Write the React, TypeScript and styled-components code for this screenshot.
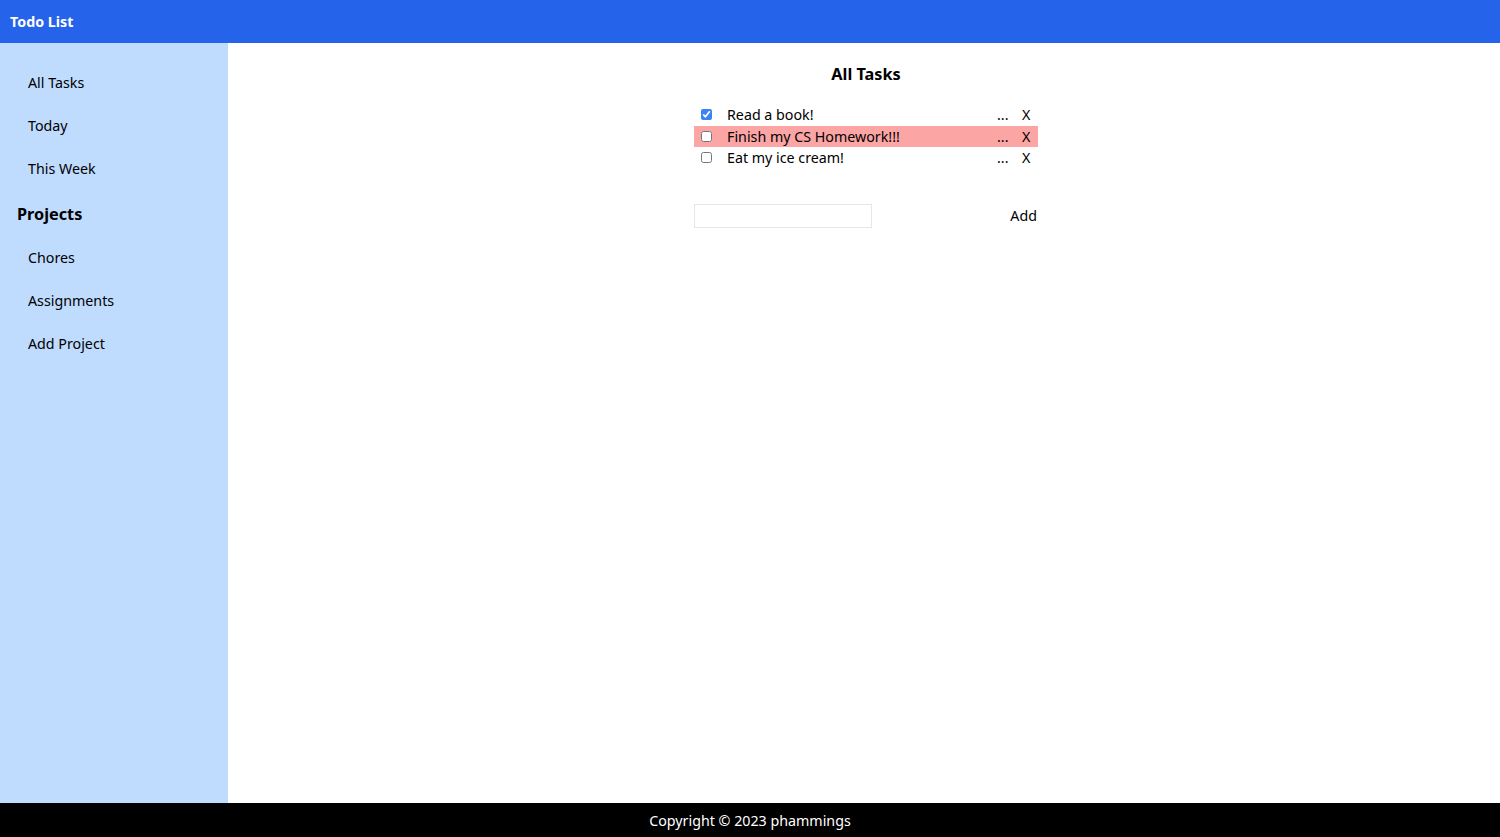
import styled, { createGlobalStyle } from 'styled-components';

const GlobalStyle = createGlobalStyle`
  html, body {
    margin: 0;
    padding: 0;
    font-family: "Noto Sans", "Open Sans", sans-serif;
    font-size: 14.25px;
    color: #000;
  }
`;

const Page = styled.div`
  display: flex;
  flex-direction: column;
  height: 100vh;
`;

const Header = styled.header`
  height: 43px;
  flex: none;
  background: #2563eb;
  color: #fff;
  font-weight: 700;
  font-size: 14.25px;
  display: flex;
  align-items: center;
  padding-left: 10px;
`;

const Body = styled.div`
  flex: 1;
  display: flex;
  min-height: 0;
`;

const Sidebar = styled.nav`
  width: 228px;
  flex: none;
  background: #bfdbfe;
  padding-top: 18px;
  box-sizing: border-box;
`;

const NavItem = styled.div`
  height: 43px;
  display: flex;
  align-items: center;
  padding-left: 28px;
  cursor: pointer;
`;

const NavHeading = styled.div`
  height: 46px;
  display: flex;
  align-items: center;
  padding-left: 17px;
  padding-top: 1px;
  box-sizing: border-box;
  font-size: 16.25px;
  font-weight: 700;
`;

const Main = styled.main`
  flex: 1;
  display: flex;
  flex-direction: column;
  align-items: center;
  padding: 20px 0 0 4px;
`;

const Title = styled.h2`
  margin: 0 0 19px;
  font-size: 16.25px;
  font-weight: 700;
  line-height: 22px;
`;

const TaskList = styled.div`
  width: 344px;
  display: flex;
  flex-direction: column;
`;

const TaskRow = styled.div<{ $urgent?: boolean }>`
  height: 21.5px;
  display: grid;
  grid-template-columns: 26px 1fr 25px 9px;
  align-items: center;
  padding: 0 7px 0 7px;
  background: ${p => (p.$urgent ? '#fca5a5' : 'transparent')};
`;

const Check = styled.input`
  margin: 0;
  width: 11px;
  height: 11px;
  accent-color: #3b82f6;
`;

const TaskName = styled.span`
  white-space: nowrap;
`;

const RowAction = styled.span`
  cursor: pointer;
`;

const AddForm = styled.div`
  width: 344px;
  margin-top: 35px;
  display: flex;
  justify-content: space-between;
  align-items: center;
`;

const TaskInput = styled.input`
  width: 178px;
  height: 24px;
  box-sizing: border-box;
  border: 1px solid #e5e7eb;
  outline: none;
  font: inherit;
  padding: 0 4px;
`;

const AddButton = styled.button`
  border: none;
  background: none;
  font: inherit;
  padding: 0 1px 0 0;
  cursor: pointer;
`;

const Footer = styled.footer`
  height: 34px;
  flex: none;
  background: #000;
  color: #fff;
  display: flex;
  align-items: center;
  justify-content: center;
`;

const tasks = [
  { id: 1, name: 'Read a book!', done: true, urgent: false },
  { id: 2, name: 'Finish my CS Homework!!!', done: false, urgent: true },
  { id: 3, name: 'Eat my ice cream!', done: false, urgent: false },
];

export default function App() {
  return (
    <Page>
      <GlobalStyle />
      <Header>Todo List</Header>
      <Body>
        <Sidebar>
          <NavItem>All Tasks</NavItem>
          <NavItem>Today</NavItem>
          <NavItem>This Week</NavItem>
          <NavHeading>Projects</NavHeading>
          <NavItem>Chores</NavItem>
          <NavItem>Assignments</NavItem>
          <NavItem>Add Project</NavItem>
        </Sidebar>
        <Main>
          <Title>All Tasks</Title>
          <TaskList>
            {tasks.map(t => (
              <TaskRow key={t.id} $urgent={t.urgent}>
                <Check type="checkbox" defaultChecked={t.done} />
                <TaskName>{t.name}</TaskName>
                <RowAction>...</RowAction>
                <RowAction>X</RowAction>
              </TaskRow>
            ))}
          </TaskList>
          <AddForm>
            <TaskInput type="text" />
            <AddButton>Add</AddButton>
          </AddForm>
        </Main>
      </Body>
      <Footer>Copyright © 2023 phammings</Footer>
    </Page>
  );
}
